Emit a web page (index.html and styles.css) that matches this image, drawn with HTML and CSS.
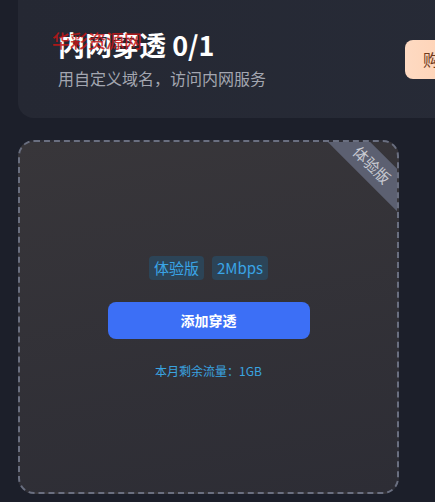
FILE: index.html
```html
<!DOCTYPE html>
<html lang="zh-CN">
<head>
<meta charset="utf-8">
<link rel="stylesheet" href="styles.css">
</head>
<body>
<div class="page">
  <header class="header">
    <div class="intro">
      <div class="title-wrap">
        <h1 class="title">内网穿透 0/1</h1>
        <span class="watermark">华彩资源网</span>
      </div>
      <p class="subtitle">用自定义域名，访问内网服务</p>
    </div>
    <button class="buy">购买流量</button>
  </header>
  <section class="card">
    <div class="ribbon">体验版</div>
    <div class="tags">
      <span class="tag">体验版</span>
      <span class="tag">2Mbps</span>
    </div>
    <button class="add">添加穿透</button>
    <p class="quota">本月剩余流量：1GB</p>
  </section>
</div>
</body>
</html>
```

FILE: styles.css
```css
html, body {
  margin: 0;
  padding: 0;
  background: #1c1f2a;
}
body {
  font-family: "Noto Sans CJK SC", "Noto Sans", sans-serif;
  overflow: hidden;
}
.page {
  width: 435px;
  height: 502px;
  overflow: hidden;
  padding: 0 0 0 18px;
  box-sizing: border-box;
}
.header {
  width: 520px;
  height: 118px;
  box-sizing: border-box;
  background: linear-gradient(90deg, #252833, #272b37);
  border-radius: 0 0 0 16px;
  display: flex;
  align-items: center;
  padding: 0 0 0 40px;
}
.intro {
  width: 347px;
  flex-shrink: 0;
}
.title-wrap {
  position: relative;
}
.title {
  margin: 0;
  font-size: 27px;
  line-height: 32px;
  font-weight: 700;
  color: #ffffff;
}
.watermark {
  position: absolute;
  left: -6px;
  top: 0;
  font-size: 18px;
  line-height: 22px;
  font-weight: 500;
  color: rgba(196, 22, 22, 0.85);
}
.subtitle {
  margin: 6px 0 0;
  font-size: 16px;
  line-height: 22px;
  color: #a3a6b0;
}
.buy {
  height: 39px;
  padding: 0 18px;
  border: none;
  border-radius: 8px;
  background: linear-gradient(90deg, #fedac2, #ffc9a6);
  color: #6e3a1c;
  font-family: inherit;
  font-size: 16px;
  flex-shrink: 0;
}
.card {
  position: relative;
  margin-top: 22px;
  width: 381px;
  height: 354px;
  box-sizing: border-box;
  border: 2px dashed #6a6f80;
  border-radius: 16px;
  background: linear-gradient(170deg, #38363a, #2d2d35);
  overflow: hidden;
  display: flex;
  flex-direction: column;
  align-items: center;
  justify-content: center;
}
.ribbon {
  position: absolute;
  top: 8px;
  right: -27px;
  width: 104px;
  height: 30px;
  line-height: 30px;
  text-align: center;
  background: #5c6071;
  color: #c9cbd3;
  font-size: 15px;
  transform: rotate(45deg);
}
.tags {
  display: flex;
  gap: 8px;
}
.tag {
  height: 24px;
  line-height: 24px;
  padding: 0 5px;
  border-radius: 4px;
  background: #2c4457;
  color: #3aa4e6;
  font-size: 15px;
}
.add {
  margin-top: 22px;
  width: 202px;
  height: 37px;
  border: none;
  border-radius: 8px;
  background: #3c6ff6;
  color: #ffffff;
  font-family: inherit;
  font-size: 14px;
  font-weight: 700;
}
.quota {
  margin: 23px 0 0;
  font-size: 12px;
  line-height: 17px;
  color: #3aa4e0;
}
```
